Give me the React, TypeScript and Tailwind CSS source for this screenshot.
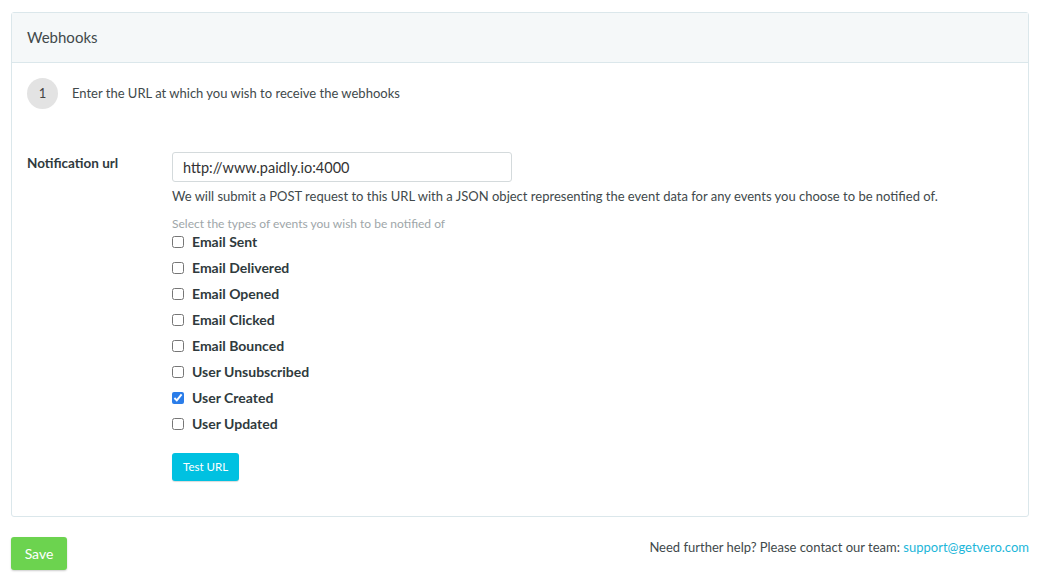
import React, { useState } from 'react';

const EVENTS = [
  'Email Sent',
  'Email Delivered',
  'Email Opened',
  'Email Clicked',
  'Email Bounced',
  'User Unsubscribed',
  'User Created',
  'User Updated',
];

export default function App() {
  const [checked, setChecked] = useState<Record<string, boolean>>({ 'User Created': true });
  const [url, setUrl] = useState('http://www.paidly.io:4000');

  return (
    <div className="min-h-screen bg-white pl-[11px] pr-[19px] pt-[12px] text-[#3f484a]" style={{ fontFamily: 'Lato, "Open Sans", sans-serif' }}>
      {/* Card */}
      <div className="rounded-[3px] border border-[#dbe7eb]">
        <div className="flex h-[50px] items-center border-b border-[#dbe7eb] bg-[#f5f8f9] px-[15px]">
          <h2 className="text-[15px] font-normal text-[#41494b]">Webhooks</h2>
        </div>

        <div className="px-[15px] pt-[15px] pb-[35px]">
          {/* Step */}
          <div className="flex items-center gap-[14px]">
            <div className="flex h-[31px] w-[31px] items-center justify-center rounded-full bg-[#e3e3e3] text-[13px] text-[#444]">1</div>
            <p className="text-[13px] text-[#41494b]">Enter the URL at which you wish to receive the webhooks</p>
          </div>

          {/* Form row */}
          <div className="mt-[43px] flex">
            <label className="w-[145px] pt-[1px] text-[13.5px] font-bold text-[#2f3a3d]">Notification url</label>
            <div className="flex-1">
              <input
                value={url}
                onChange={e => setUrl(e.target.value)}
                className="h-[30px] w-[340px] rounded-[3px] border border-[#d4dadc] px-[10px] text-[14.5px] text-[#333] outline-none"
              />
              <p className="mt-[5px] text-[13px] text-[#41494b]">
                We will submit a POST request to this URL with a JSON object representing the event data for any events you choose to be notified of.
              </p>
              <p className="mt-[11px] text-[12px] leading-[12px] text-[#9ea6a9]">Select the types of events you wish to be notified of</p>
              <div className="-mt-[1px] flex flex-col">
                {EVENTS.map(ev => (
                  <label key={ev} className="flex h-[26px] items-center gap-[8px] text-[14px] font-bold text-[#2f3a3d]">
                    <input
                      type="checkbox"
                      checked={!!checked[ev]}
                      onChange={() => setChecked(c => ({ ...c, [ev]: !c[ev] }))}
                      className="m-0 h-[12px] w-[12px] accent-[#2b7de9]"
                    />
                    {ev}
                  </label>
                ))}
              </div>
              <button className="mt-[16px] h-[28px] rounded-[3px] bg-[#00c1e1] px-[11px] text-[11.5px] text-white shadow-[0_1px_1px_rgba(0,0,0,0.15)]">
                Test URL
              </button>
            </div>
          </div>
        </div>
      </div>

      {/* Footer */}
      <div className="mt-[20px] flex items-start justify-between">
        <button className="h-[33px] w-[56px] rounded-[3px] bg-[#6cd34f] text-[14px] text-white shadow-[0_1px_2px_rgba(0,0,0,0.2)]">Save</button>
        <p className="pt-[1px] text-[13px] text-[#41494b]">
          Need further help? Please contact our team: <a className="text-[#1cb6d9]" href="#">support@getvero.com</a>
        </p>
      </div>
    </div>
  );
}
